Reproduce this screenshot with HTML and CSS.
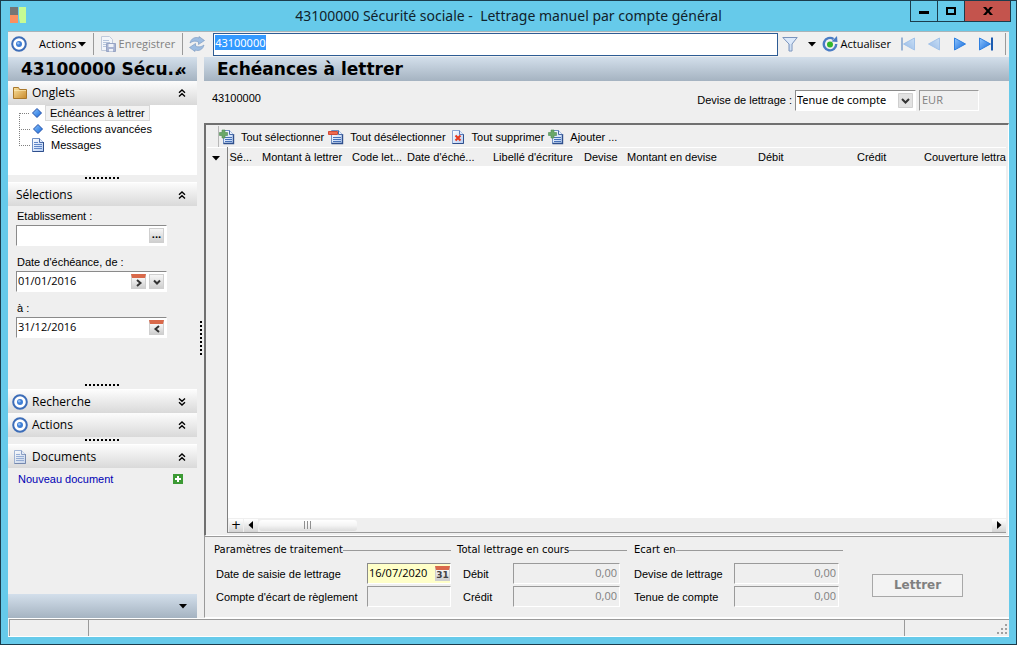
FILE: index.html
```html
<!DOCTYPE html>
<html lang="fr">
<head>
  <meta charset="UTF-8">
  <meta name="viewport" content="width=device-width, initial-scale=1.0">
  <title>43100000 Sécurité sociale - Lettrage manuel par compte général</title>
  <link rel="stylesheet" href="styles.css">
</head>
<body>
  <!-- icônes partagées -->
  <svg class="sprite" aria-hidden="true">
    <defs>
      <linearGradient id="g-blue" x1="0" y1="0" x2="1" y2="1">
        <stop offset="0" stop-color="#8fc6ff"/><stop offset="1" stop-color="#1468d8"/>
      </linearGradient>
      <linearGradient id="g-page" x1="0" y1="0" x2="1" y2="1">
        <stop offset="0" stop-color="#ffffff"/><stop offset="1" stop-color="#b4cdf4"/>
      </linearGradient>
      <linearGradient id="g-folder" x1="0" y1="0" x2="1" y2="1">
        <stop offset="0" stop-color="#fbe3a0"/><stop offset="1" stop-color="#c98a2b"/>
      </linearGradient>
    </defs>
    <symbol id="i-target" viewBox="0 0 16 16">
      <circle cx="8" cy="8" r="6.8" fill="#fff" stroke="#3d6db8" stroke-width="2"/>
      <circle cx="8" cy="8" r="3" fill="#3f7fd6"/>
      <circle cx="7.3" cy="7.2" r="1.3" fill="#8fbcf2"/>
    </symbol>
    <symbol id="i-page" viewBox="0 0 16 16">
      <path d="M2.5 1.5h7l4 4v9h-11z" fill="url(#g-page)" stroke="#6f8fc4"/>
      <path d="M9.5 1.5v4h4" fill="#dfeafc" stroke="#4a6ba8"/>
      <path d="M13.5 5v9.5h-11" fill="none" stroke="#2f4f8c"/>
      <path d="M4 5.5h4M4 7.5h8M4 9.5h8M4 11.5h8" stroke="#5f86c8"/>
    </symbol>
    <symbol id="i-diamond" viewBox="0 0 16 16">
      <path d="M8 3.5l4.5 4.5-4.5 4.5-4.5-4.5z" fill="url(#g-blue)" stroke="#2350a8"/>
    </symbol>
    <symbol id="i-folder" viewBox="0 0 16 16">
      <path d="M1.5 2.5h5l1 2h7v9h-13z" fill="url(#g-folder)" stroke="#a9772a"/>
      <path d="M2 5.5h12" stroke="#fff0c0" opacity=".6"/>
    </symbol>
    <symbol id="i-up" viewBox="0 0 8 8">
      <path d="M1 3.7l3-2.7 3 2.7M1 7.4l3-2.7 3 2.7" fill="none" stroke="#000" stroke-width="1.4"/>
    </symbol>
    <symbol id="i-down" viewBox="0 0 8 8">
      <path d="M1 .6l3 2.7 3-2.7M1 4.3l3 2.7 3-2.7" fill="none" stroke="#000" stroke-width="1.4"/>
    </symbol>
    <symbol id="i-arrow" viewBox="0 0 8 5">
      <path d="M0 0h8l-4 4.5z" fill="#000"/>
    </symbol>
    <symbol id="i-add-page" viewBox="0 0 16 16">
      <path d="M4.5 1.5h6l4 4v9h-10z" fill="url(#g-page)" stroke="#6f8fc4"/>
      <path d="M14.5 5v9.5h-10" fill="none" stroke="#2f4f8c" stroke-width="1.4"/>
      <path d="M10.5 1.5v4h4" fill="#eaf1fd" stroke="#4a6ba8"/>
      <path d="M6 8.5h7M6 10.5h7M6 12.5h7" fill="none" stroke="#4671b8"/>
      <path d="M3 1h3v2.500h2.500v3h-2.500v2.500h-3v-2.500h-2.500v-3h2.500z" fill="#6aa86a" stroke="#4d8a56" stroke-width=".6"/>
    </symbol>
    <symbol id="i-remove-page" viewBox="0 0 16 16">
      <path d="M3.5 1.5h7l4 4v9h-11z" fill="url(#g-page)" stroke="#6f8fc4"/>
      <path d="M14.5 5v9.5h-11" fill="none" stroke="#2f4f8c" stroke-width="1.4"/>
      <path d="M10.5 1.5v4h4" fill="#eaf1fd" stroke="#4a6ba8"/>
      <path d="M5 8.5h8M5 10.5h8M5 12.5h8" fill="none" stroke="#4671b8"/>
      <path d="M.5 2.5h9v3h-9z" fill="#ee6a50" stroke="#d04a36"/>
    </symbol>
    <symbol id="i-delete-page" viewBox="0 0 16 16">
      <path d="M2.5 1.5h7l4 4v9h-11z" fill="url(#g-page)" stroke="#8aa5d4"/>
      <path d="M13.5 5v9.5h-11" fill="none" stroke="#2f4f8c"/>
      <path d="M9.5 1.5v4h4" fill="#dfeafc" stroke="#5a7ab8"/>
      <path d="M5.5 6.5l5 5M10.5 6.5l-5 5" stroke="#e8381c" stroke-width="2"/>
    </symbol>
    <symbol id="i-next" viewBox="0 0 16 16">
      <path d="M2.5 2l11 6-11 6z" fill="url(#g-blue)" stroke="#2f80e0"/>
    </symbol>
    <symbol id="i-last" viewBox="0 0 16 16">
      <path d="M1.5 2l11 6-11 6z" fill="url(#g-blue)" stroke="#2f80e0"/>
      <path d="M14 1.5v13" stroke="#1c5cb0" stroke-width="2"/>
    </symbol>
    <symbol id="i-refresh" viewBox="0 0 16 16">
      <path d="M1 7c1-4.5 5-6.5 9-5v-1.5l5.5 4-6 4v-2.5c-3-1.5-6-1-8.5 1z" fill="#9dbde2" stroke="#7795bd" stroke-width=".6"/>
      <path d="M15 9c-1 4.5-5 6.5-9 5v1.5l-5.5-4 6-4v2.5c3 1.5 6 1 8.5-1z" fill="#9dbde2" stroke="#7795bd" stroke-width=".6"/>
    </symbol>
    <symbol id="i-save" viewBox="0 0 16 16">
      <path d="M1.5.5h8l3 3v11h-11z" fill="#f2f5fa" stroke="#c0cadb"/>
      <path d="M3 4.5h6M3 6.5h7M3 8.5h4M3 10.5h3" stroke="#b5c4dc"/>
      <path d="M6.5 7.5h9v8h-9z" fill="#a9b4d2" stroke="#97a4c4"/>
      <path d="M8.5 8h5v3h-5zM9 13h4v2.5h-4z" fill="#eef1f8"/>
    </symbol>
    <symbol id="i-filter" viewBox="0 0 16 16">
      <path d="M.8 1.5h14.4l-5.2 6.5v7h-3v-7z" fill="#dce9fa" stroke="#7a94bd"/>
      <path d="M7.7 8v6" stroke="#9ab2d6"/>
    </symbol>
    <symbol id="i-reload" viewBox="0 0 16 16">
      <path d="M11.5 3a6.2 6.2 0 1 0 2.7 5" fill="none" stroke="#4a7cc4" stroke-width="2.4"/>
      <path d="M9.5 5.5l6 .5-.5-6z" fill="#4a7cc4"/>
      <circle cx="8" cy="8.5" r="3" fill="#32b52c"/>
    </symbol>
  </svg>

  <div class="window">
    <header class="titlebar">
      <svg class="logo" viewBox="0 0 16 16">
        <path d="M0 0h8v8h-8z" fill="#757575"/>
        <path d="M0 8h8v8h-8z" fill="#fb8f60"/>
        <path d="M9 0h7v16h-6l-1-5z" fill="#c6fb93"/>
      </svg>
      <h1>43100000 Sécurité sociale -&nbsp; Lettrage manuel par compte général</h1>
      <div class="controls">
        <button type="button" aria-label="Réduire"><svg viewBox="0 0 10 8"><path d="M0 4h10v3h-10z"/></svg></button>
        <button type="button" aria-label="Agrandir"><svg viewBox="0 0 10 8"><path d="M0 0h10v8h-10zM2 2v4h6v-4z" fill-rule="evenodd"/></svg></button>
        <button type="button" class="close" aria-label="Fermer"><svg viewBox="0 0 10 8"><path d="M0 0h3l2 2.5 2-2.5h3l-3.5 4 3.5 4h-3l-2-2.5-2 2.5h-3l3.5-4z"/></svg></button>
      </div>
    </header>

    <div class="content">
      <div class="toolbar">
        <svg class="icon"><use href="#i-target"/></svg>
        <button type="button" class="tool actions">Actions<svg class="arrow"><use href="#i-arrow"/></svg></button>
        <span class="sep"></span>
        <button type="button" class="tool" disabled><svg class="icon"><use href="#i-save"/></svg>Enregistrer</button>
        <span class="sep"></span>
        <button type="button" class="tool" aria-label="Recharger"><svg class="icon"><use href="#i-refresh"/></svg></button>
        <input type="text" id="account" class="account" value="43100000" aria-label="Compte">
        <button type="button" class="tool filter" aria-label="Filtrer"><svg class="icon"><use href="#i-filter"/></svg><svg class="arrow"><use href="#i-arrow"/></svg></button>
        <button type="button" class="tool"><svg class="icon"><use href="#i-reload"/></svg>Actualiser</button>
        <div class="pager">
          <button type="button" class="tool faded flip" aria-label="Premier"><svg class="icon"><use href="#i-last"/></svg></button>
          <button type="button" class="tool faded flip" aria-label="Précédent"><svg class="icon"><use href="#i-next"/></svg></button>
          <button type="button" class="tool" aria-label="Suivant"><svg class="icon"><use href="#i-next"/></svg></button>
          <button type="button" class="tool" aria-label="Dernier"><svg class="icon"><use href="#i-last"/></svg></button>
        </div>
        <span class="sep"></span>
      </div>

      <div class="columns">
        <aside class="sidebar">
          <div class="band side-title"><h2>43100000 Sécu..</h2><button type="button" class="collapse" aria-label="Replier">«</button></div>

          <button type="button" class="section"><svg class="icon"><use href="#i-folder"/></svg>Onglets<svg class="chevron"><use href="#i-up"/></svg></button>
          <ul class="tree">
            <li><svg class="icon"><use href="#i-diamond"/></svg><a href="#echeances" class="selected">Echéances à lettrer</a></li>
            <li><svg class="icon"><use href="#i-diamond"/></svg><a href="#selections">Sélections avancées</a></li>
            <li><svg class="icon"><use href="#i-page"/></svg><a href="#messages">Messages</a></li>
          </ul>
          <div class="splitter"></div>

          <button type="button" class="section plain">Sélections<svg class="chevron"><use href="#i-up"/></svg></button>
          <form class="filters">
            <label for="etab">Etablissement :</label>
            <div class="field"><input type="text" id="etab"><button type="button" class="mini dots" aria-label="Parcourir">...</button></div>
            <label for="du">Date d'échéance, de :</label>
            <div class="field"><input type="text" id="du" value="01/01/2016">
              <button type="button" class="mini cal" aria-label="Suivante"><svg viewBox="0 0 8 8"><path d="M2 1l3.5 3-3.5 3"/></svg></button>
              <button type="button" class="mini" aria-label="Choisir"><svg viewBox="0 0 8 8"><path d="M1 2.5l3 3 3-3"/></svg></button>
            </div>
            <label for="au">à :</label>
            <div class="field"><input type="text" id="au" value="31/12/2016">
              <button type="button" class="mini cal" aria-label="Précédente"><svg viewBox="0 0 8 8"><path d="M6 1l-3.5 3 3.5 3"/></svg></button>
            </div>
          </form>
          <div class="splitter"></div>

          <button type="button" class="section"><svg class="icon"><use href="#i-target"/></svg>Recherche<svg class="chevron"><use href="#i-down"/></svg></button>
          <button type="button" class="section"><svg class="icon"><use href="#i-target"/></svg>Actions<svg class="chevron"><use href="#i-up"/></svg></button>
          <div class="splitter"></div>
          <button type="button" class="section"><svg class="icon pale"><use href="#i-page"/></svg>Documents<svg class="chevron"><use href="#i-up"/></svg></button>
          <div class="documents">
            <a href="#nouveau">Nouveau document</a>
            <svg class="plus" viewBox="0 0 10 10"><path d="M0 0h10v10h-10z" fill="#3c9a34"/><path d="M5 2v6M2 5h6" stroke="#fff" stroke-width="2"/></svg>
          </div>
          <div class="band side-foot"><svg class="arrow"><use href="#i-arrow"/></svg></div>
        </aside>

        <div class="grip"></div>

        <main class="main">
          <div class="band"><h2>Echéances à lettrer</h2></div>
          <div class="info">
            <span class="number">43100000</span>
            <label for="devise">Devise de lettrage :</label>
            <div class="field combo">
              <select id="devise"><option>Tenue de compte</option></select>
            </div>
            <input type="text" class="readonly currency" value="EUR" aria-label="Devise" disabled>
          </div>

          <div class="listing">
            <div class="list-tools">
              <button type="button"><svg class="icon"><use href="#i-add-page"/></svg>Tout sélectionner</button>
              <button type="button"><svg class="icon"><use href="#i-remove-page"/></svg>Tout désélectionner</button>
              <button type="button"><svg class="icon"><use href="#i-delete-page"/></svg>Tout supprimer</button>
              <button type="button"><svg class="icon"><use href="#i-add-page"/></svg>Ajouter ...</button>
            </div>
            <div class="grid">
              <table>
                <colgroup>
                  <col class="w-mark"><col class="w-sel"><col class="w-amount"><col class="w-code"><col class="w-date"><col class="w-label"><col class="w-dev"><col class="w-amount-dev"><col class="w-debit"><col class="w-credit"><col>
                </colgroup>
                <thead>
                  <tr>
                    <th><svg class="arrow"><use href="#i-arrow"/></svg></th>
                    <th>Sé...</th>
                    <th>Montant à lettrer</th>
                    <th>Code let...</th>
                    <th>Date d'éché...</th>
                    <th>Libellé d'écriture</th>
                    <th>Devise</th>
                    <th>Montant en devise</th>
                    <th>Débit</th>
                    <th>Crédit</th>
                    <th>Couverture lettra</th>
                  </tr>
                </thead>
              </table>
              <div class="rows"></div>
              <div class="scroll">
                <button type="button" aria-label="Ajouter une ligne">+</button>
                <button type="button" aria-label="Défiler à gauche"><svg viewBox="0 0 8 8"><path d="M6 0v8l-4.5-4z"/></svg></button>
                <span class="thumb"></span>
                <button type="button" aria-label="Défiler à droite"><svg viewBox="0 0 8 8"><path d="M2 0v8l4.5-4z"/></svg></button>
              </div>
            </div>
          </div>

          <form class="params">
            <section class="group treatment">
              <h3>Paramètres de traitement</h3>
              <div class="line"><label for="saisie">Date de saisie de lettrage</label>
                <div class="field date"><input type="text" id="saisie" value="16/07/2020"><button type="button" class="mini day" aria-label="Calendrier">31</button></div></div>
              <div class="line"><label for="ecart">Compte d'écart de règlement</label><input type="text" class="readonly" id="ecart" disabled></div>
            </section>
            <section class="group total">
              <h3>Total lettrage en cours</h3>
              <div class="line"><label for="debit">Débit</label><input type="text" class="readonly" id="debit" value="0,00" disabled></div>
              <div class="line"><label for="credit">Crédit</label><input type="text" class="readonly" id="credit" value="0,00" disabled></div>
            </section>
            <section class="group gap">
              <h3>Ecart en</h3>
              <div class="line"><label for="edevise">Devise de lettrage</label><input type="text" class="readonly" id="edevise" value="0,00" disabled></div>
              <div class="line"><label for="etenue">Tenue de compte</label><input type="text" class="readonly" id="etenue" value="0,00" disabled></div>
            </section>
            <button type="button" class="submit" disabled>Lettrer</button>
          </form>
        </main>
      </div>

      <footer class="status">
        <span class="cell first"></span>
        <span class="cell"></span>
        <span class="cell last"><svg class="resize" viewBox="0 0 12 12"><path d="M8 0h2v2h-2zM4 4h2v2h-2zM8 4h2v2h-2zM0 8h2v2h-2zM4 8h2v2h-2zM8 8h2v2h-2z" fill="#a0a0a0"/></svg></span>
      </footer>
    </div>
  </div>
  <script>
    // le compte est sélectionné à l'ouverture
    const account = document.getElementById('account');
    account.focus();
    account.select();
  </script>
</body>
</html>
```
FILE: styles.css
```css
*{
  box-sizing: border-box;
}
body{
  margin: 0;
  font-family: "Liberation Sans", Arial, sans-serif;
  font-size: 11px;
  line-height: 16px;
  color: #000;
}
h1, h2, h3, ul{
  margin: 0;
  padding: 0;
}
button, input, select{
  margin: 0;
  padding: 0;
  border: 0;
  border-radius: 0;
  background: none;
  font: inherit;
  color: inherit;
  outline: none;
}
a{
  color: inherit;
  text-decoration: none;
}
.sprite{
  position: absolute;
  width: 0;
  height: 0;
}
.icon{
  width: 16px;
  height: 16px;
  flex: none;
}
.pale{
  opacity: .6;
}
.arrow{
  width: 8px;
  height: 5px;
  flex: none;
}

/* fenêtre */
.window{
  display: flex;
  flex-direction: column;
  min-height: 100vh;
  padding: 0 7px 7px;
  border: 1px solid #1b3c4c;
  background: #66caea;
}
.titlebar{
  display: grid;
  grid-template-columns: 1fr auto 1fr;
  height: 30px;
}
.logo{
  width: 16px;
  height: 16px;
  margin: 6px 2px;
}
.titlebar h1{
  font: 14px/30px "Noto Sans", sans-serif;
  color: #10222b;
}
.controls{
  display: flex;
  justify-self: end;
  height: 21px;
  margin-right: -2px;
  border: 1px solid #1b3c4c;
  border-top: 0;
}
.controls button{
  width: 27px;
  border-right: 1px solid #1b3c4c;
}
.controls svg{
  width: 10px;
  height: 8px;
}
.controls .close{
  width: 45px;
  border: 0;
  background: #c4544d;
}
.content{
  flex: 1;
  display: flex;
  flex-direction: column;
  background: #efefef;
}

/* barre d'outils */
.toolbar{
  display: flex;
  align-items: center;
  height: 26px;
  padding: 0 3px 1px;
  border-top: 1px solid #a9b4b9;
  background: #f0f0f0;
  font-family: "Open Sans", sans-serif;
}
.tool{
  display: flex;
  align-items: center;
  gap: 3px;
}
.tool:disabled{
  color: #808080;
}
.actions{
  gap: 1px;
  margin-left: 12px;
}
.sep{
  width: 1px;
  height: 22px;
  margin: 0 6px 0 7px;
  background: #9a9a9a;
}
.sep:last-child{
  margin: 0 0 0 11px;
}
.account{
  flex: 1;
  min-width: 0;
  height: 23px;
  margin: 0 4px 0 8px;
  padding: 0 1px 3px;
  border: 1px solid #2d5c94;
  background: #fff;
  font-family: "Noto Sans", sans-serif;
}
.account::selection{
  background: #3399ff;
  color: #fff;
}
.filter{
  gap: 10px;
  margin-right: 6px;
}
.pager{
  display: flex;
  gap: 10px;
  margin-left: 9px;
}
.faded{
  opacity: .4;
}
.flip{
  transform: scaleX(-1);
}

/* bandeaux */
.band{
  display: flex;
  align-items: center;
  flex: none;
  height: 24px;
  padding: 0 13px;
  background: linear-gradient(#d3dfeb, #a5b3c1);
}
.band h2{
  font: bold 17px/24px "DejaVu Sans", sans-serif;
  white-space: nowrap;
}
.side-title{
  padding-right: 0;
}
.collapse{
  margin-left: -4px;
  font: bold 16px/24px "Open Sans", sans-serif;
}
.side-foot{
  justify-content: flex-end;
  padding-right: 10px;
}

.columns{
  flex: 1;
  display: grid;
  grid-template-columns: 189px 7px 1fr;
}

/* panneau de gauche */
.sidebar{
  display: flex;
  flex-direction: column;
}
.section{
  display: flex;
  align-items: center;
  gap: 4px;
  flex: none;
  height: 24px;
  padding: 0 11px 0 4px;
  background: linear-gradient(#fcfcfc, #d9d9d9);
  font: 12px/24px "Open Sans", sans-serif;
}
.splitter + .section{
  border-top: 1px solid #fff;
}
.plain{
  padding-left: 8px;
}
.chevron{
  width: 8px;
  height: 8px;
  margin-left: auto;
}
.tree{
  height: 70px;
  padding-left: 21px;
  background: #fff;
  list-style: none;
}
.tree li{
  display: flex;
  align-items: center;
  height: 16px;
}
.tree li::before{
  content: "";
  width: 10px;
  height: 16px;
  margin: -16px -10px 0 -10px;
  border: dotted #808080;
  border-width: 0 0 1px 1px;
}
.tree li .icon{
  margin-left: 10px;
}
.tree li:first-child::before{
  height: 1px;
  margin-top: 0;
  border-left: 0;
}
.tree a{
  padding: 0 4px;
  line-height: 14px;
  border: 1px solid transparent;
}
.tree .selected{
  border-color: #d8d8d8;
  background: #f2f2f2;
}
.splitter{
  height: 7px;
  flex: none;
  background: repeating-linear-gradient(90deg, #000 0 2px, transparent 2px 4px) center 2px / 35px 2px no-repeat;
}
.filters{
  flex: 1;
  padding: 2px 8px 0;
}
.filters label{
  display: block;
  padding-left: 1px;
  line-height: 17px;
}
.filters .field{
  margin-bottom: 8px;
}
.field{
  display: flex;
  align-items: center;
  gap: 3px;
  width: 151px;
  height: 21px;
  padding-right: 2px;
  border: 1px solid #8a8a8a;
  border-right-color: #fff;
  border-bottom-color: #fff;
  background: #fff;
  font-family: "Open Sans", sans-serif;
}
.field input{
  flex: 1;
  width: 0;
  padding: 0 1px 2px;
}
.mini{
  display: flex;
  align-items: center;
  justify-content: center;
  width: 15px;
  height: 15px;
  border: 1px solid #cfcfcf;
  background: linear-gradient(#f6f6f6, #cfcfcf);
}
.mini svg{
  width: 8px;
  height: 8px;
  fill: none;
  stroke: #333;
  stroke-width: 2;
}
.dots{
  font-weight: bold;
  line-height: 8px;
  padding-bottom: 3px;
}
.cal{
  border-top: 4px solid #d9694a;
}
.documents{
  display: flex;
  align-items: center;
  justify-content: space-between;
  height: 22px;
  padding: 0 14px 0 10px;
  margin-bottom: 104px;
  color: #0000b4;
}
.plus{
  width: 10px;
  height: 10px;
}
.grip{
  align-self: center;
  justify-self: center;
  width: 2px;
  height: 34px;
  background: repeating-linear-gradient(#000 0 2px, transparent 2px 4px);
}

/* zone principale */
.main{
  display: flex;
  flex-direction: column;
  min-width: 0;
}
.info{
  display: flex;
  align-items: center;
  height: 42px;
  padding: 0 30px 4px 8px;
}
.number{
  flex: 1;
  padding-bottom: 4px;
}
.combo{
  width: 121px;
  margin: 0 3px;
  font-family: "Noto Sans", sans-serif;
}
.combo select{
  flex: 1;
  height: 17px;
  padding: 0 1px;
  appearance: none;
  background: url("data:image/svg+xml,%3Csvg xmlns='http://www.w3.org/2000/svg' viewBox='0 0 15 15'%3E%3Cpath d='M.5.5h14v14h-14z' fill='%23e2e2e2' stroke='%23cfcfcf'/%3E%3Cpath d='M4 6l3.5 3.5L11 6' fill='none' stroke='%23333' stroke-width='2'/%3E%3C/svg%3E") right center / 15px 15px no-repeat;
}
.readonly{
  height: 21px;
  padding: 0 2px 2px;
  border: 1px solid #9a9a9a;
  border-right-color: #fff;
  border-bottom-color: #fff;
  background: #efefef;
  color: #808080;
  font-family: "Open Sans", sans-serif;
}
.currency{
  width: 60px;
}
.listing{
  flex: 1;
  display: flex;
  flex-direction: column;
  padding: 1px 2px 2px 1px;
  border: 1px solid #9a9a9a;
  border-top: 2px solid #707070;
  border-left: 2px solid #707070;
  border-right-color: #fff;
  border-bottom-color: #fff;
}
.list-tools{
  display: flex;
  align-items: center;
  gap: 4px;
  height: 21px;
  margin-left: 11px;
  border-left: 1px solid #b8b8b8;
}
.list-tools button{
  display: flex;
  align-items: center;
  gap: 6px;
}
.grid{
  flex: 1;
  display: flex;
  flex-direction: column;
  min-width: 0;
}
table{
  width: 100%;
  table-layout: fixed;
  border-collapse: collapse;
  border-top: 1px solid #fff;
}
th{
  height: 18px;
  padding: 0 0 0 4px;
  font-weight: normal;
  text-align: left;
  white-space: nowrap;
}
th:first-child{
  padding-left: 5px;
  line-height: 8px;
}
th:nth-child(2){
  padding-left: 2px;
  border-left: 1px solid #808080;
}
.w-mark{ width: 20px; }
.w-sel{ width: 31px; }
.w-amount{ width: 90px; }
.w-code{ width: 55px; }
.w-date{ width: 86px; }
.w-label{ width: 91px; }
.w-dev{ width: 43px; }
.w-amount-dev{ width: 131px; }
.w-debit{ width: 99px; }
.w-credit{ width: 67px; }
.rows{
  flex: 1;
  margin-left: 20px;
  border-left: 1px solid #808080;
  background: #fff;
}
.scroll{
  display: flex;
  align-items: center;
  gap: 1px;
  height: 15px;
  margin-left: 20px;
  padding-left: 1px;
  border-left: 1px solid #808080;
  border-bottom: 1px solid #9a9a9a;
}
.scroll button{
  width: 14px;
  height: 13px;
  background: linear-gradient(#fff, #d4d4d4);
  font: 12px/12px "DejaVu Sans", sans-serif;
}
.scroll button:last-child{
  margin-left: auto;
}
.scroll svg{
  display: block;
  width: 8px;
  height: 8px;
  margin: auto;
}
.thumb{
  width: 98px;
  height: 11px;
  border-radius: 3px;
  background: repeating-linear-gradient(90deg, #909090 0 1px, transparent 1px 3px) center / 8px 8px no-repeat, linear-gradient(#fff, #f4f4f4 50%, #dcdcdc);
}

/* paramètres */
.params{
  display: flex;
  height: 82px;
  padding: 6px 10px 0 9px;
  border: 1px solid #9a9a9a;
  border-right: 0;
  border-bottom-color: #fff;
}
.group h3{
  display: flex;
  align-items: center;
  height: 14px;
  margin-bottom: 6px;
  font: 10px/14px "DejaVu Sans", sans-serif;
  white-space: nowrap;
}
.group h3::after{
  content: "";
  flex: 1;
  height: 1px;
  background: #9a9a9a;
}
.line{
  display: flex;
  align-items: center;
  justify-content: space-between;
  height: 21px;
  margin-bottom: 2px;
}
.line .readonly{
  text-align: right;
}
.treatment{
  width: 237px;
  margin-right: 6px;
}
.treatment label{
  padding-left: 2px;
}
.treatment .readonly, .date{
  width: 84px;
}
.date{
  padding-right: 0;
  background: #ffffc8;
}
.day{
  border-top: 4px solid #d9694a;
  font: bold 9px/10px "DejaVu Sans", sans-serif;
  color: #444;
}
.total{
  width: 170px;
  margin-right: 7px;
}
.total .line{
  padding: 0 7px 0 6px;
}
.total .readonly{
  width: 107px;
}
.gap{
  width: 209px;
  margin-right: 29px;
}
.gap .line{
  padding-right: 4px;
}
.gap .readonly{
  width: 105px;
}
.submit{
  align-self: center;
  width: 91px;
  height: 23px;
  margin-top: 10px;
  border: 1px solid #a8a8a8;
  background: #f3f3f3;
  color: #808080;
  font: bold 12px/20px "DejaVu Sans", sans-serif;
}

/* barre d'état */
.status{
  display: flex;
  height: 19px;
  border-top: 1px solid #fff;
  border-bottom: 1px solid #fff;
}
.cell{
  flex: 1;
  border: 1px solid #9a9a9a;
  border-width: 1px 0 0 1px;
}
.first{
  flex: none;
  width: 79px;
  margin-left: 1px;
}
.last{
  display: flex;
  flex: none;
  justify-content: flex-end;
  align-items: flex-end;
  width: 105px;
}
.resize{
  width: 12px;
  height: 12px;
}
```
